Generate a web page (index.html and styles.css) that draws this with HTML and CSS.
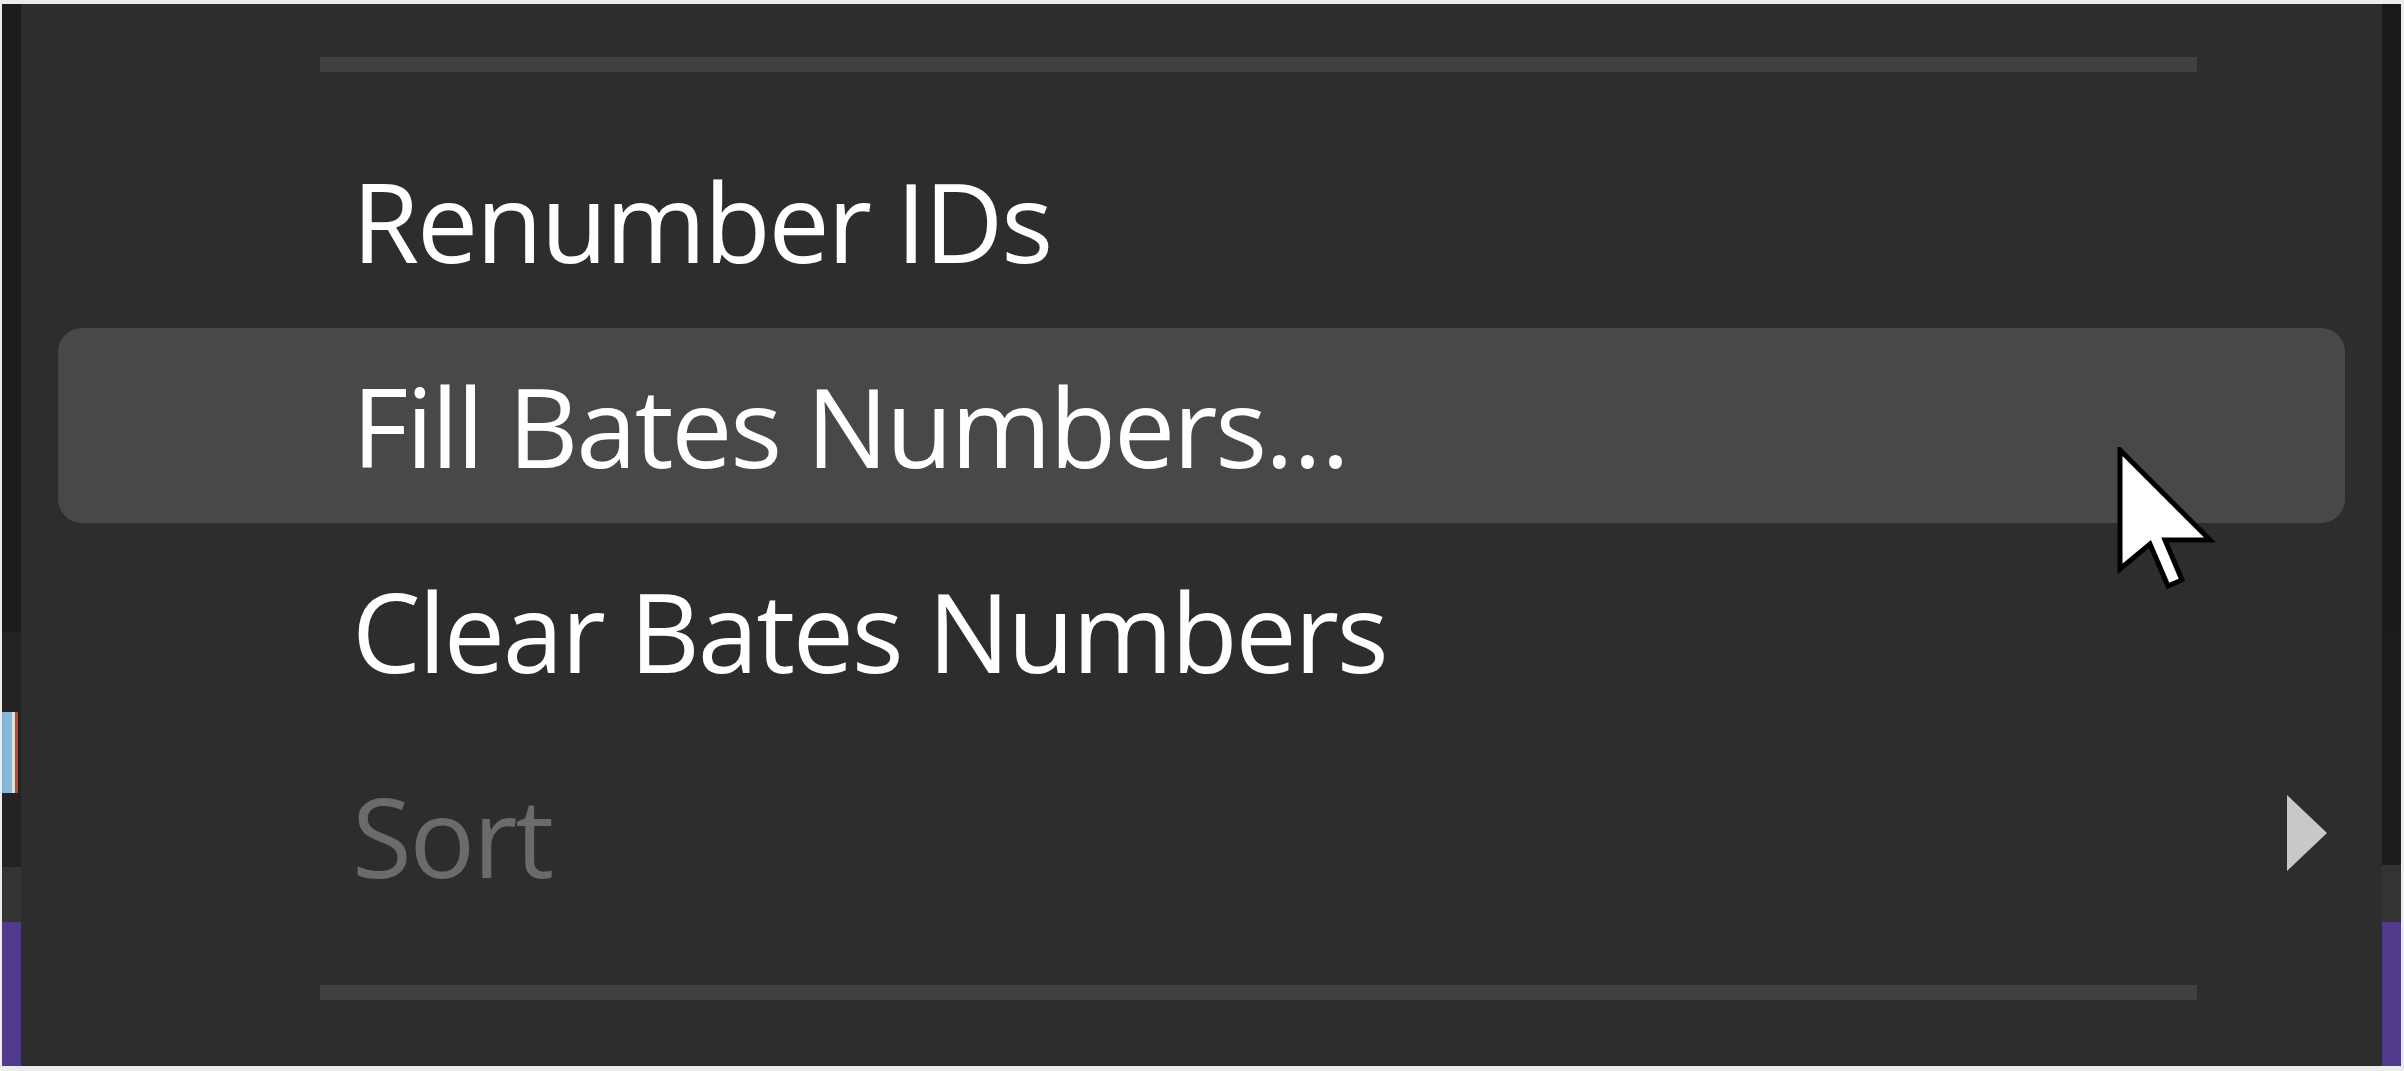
FILE: index.html
```html
<!DOCTYPE html>
<html lang="en">
<head>
<meta charset="utf-8">
<title>Context menu</title>
<link rel="stylesheet" href="styles.css">
</head>
<body>
<div class="frame">
  <div class="strip strip-left">
    <div class="seg seg-dark" style="height:628px"></div>
    <div class="seg seg-mid" style="height:80px"></div>
    <div class="seg seg-mid thumb-row" style="height:81px"><div class="thumb"></div></div>
    <div class="seg seg-mid" style="height:74px"></div>
    <div class="seg seg-light" style="height:55px"></div>
    <div class="seg seg-purple"></div>
  </div>

  <div class="menu">
    <div class="sep sep-top"></div>
    <ul class="items">
      <li class="item">Renumber IDs</li>
      <li class="item is-hover">Fill Bates Numbers…</li>
      <li class="item">Clear Bates Numbers</li>
      <li class="item is-disabled">Sort<span class="submenu-arrow"></span></li>
    </ul>
    <div class="sep sep-bottom"></div>
  </div>

  <div class="strip strip-right">
    <div class="seg seg-darkest" style="height:626px"></div>
    <div class="seg seg-dark" style="height:235px"></div>
    <div class="seg seg-light" style="height:57px"></div>
    <div class="seg seg-purple"></div>
  </div>

  <svg class="cursor" width="104" height="150" viewBox="0 0 104 150" aria-hidden="true">
    <polygon points="3,3 3,122 33,97 51,139 65,133 48,93 93,93"
             fill="#ffffff" stroke="#000000" stroke-width="5" stroke-linejoin="miter"/>
  </svg>
</div>
</body>
</html>
```

FILE: styles.css
```css
* { box-sizing: border-box; }

html, body {
  margin: 0;
  padding: 0;
}

body {
  width: 2404px;
  height: 1071px;
  background: #ececec;
  overflow: hidden;
  font-family: "Open Sans", "Noto Sans", "DejaVu Sans", sans-serif;
}

.frame {
  position: relative;
  display: flex;
  margin: 4px 3px 0 2px;
  height: 1062px;
}

.strip {
  width: 19px;
  display: flex;
  flex-direction: column;
  flex: none;
}

.seg { flex: none; }
.seg-darkest { background: #1a1a1a; }
.seg-dark { background: #1c1c1c; }
.seg-mid { background: #222222; }
.seg-light { background: #333333; }
.seg-purple { flex: 1; background: #4f3a8b; }

.thumb-row { display: flex; }
.thumb {
  width: 16px;
  height: 100%;
  background: linear-gradient(to right, #7fb2d4 0%, #8ebcd9 62%, #e6ded0 62%, #e6ded0 80%, #b24a3c 80%, #b24a3c 100%);
}

.menu {
  flex: 1;
  background: #2d2d2d;
  padding-top: 53px;
}

.sep {
  height: 15px;
  background: #404040;
  margin-left: 299px;
  margin-right: 185px;
}

.sep-bottom { margin-top: 47px; }

.items {
  list-style: none;
  margin: 46px 0 0 0;
  padding: 5px 37px;
  display: flex;
  flex-direction: column;
  gap: 10px;
}

.item {
  height: 195px;
  display: flex;
  align-items: center;
  padding: 0 18px 0 294px;
  border-radius: 24px;
  color: #ffffff;
  font-size: 109px;
  letter-spacing: -2.2px;
  line-height: 1;
  white-space: nowrap;
}

.item.is-hover { background: #484848; }

.item.is-disabled { color: #6b6b6b; }

.submenu-arrow {
  margin-left: auto;
  margin-top: -6px;
  width: 0;
  height: 0;
  border-left: 40px solid #c8c8c8;
  border-top: 38px solid transparent;
  border-bottom: 38px solid transparent;
}

.cursor {
  position: absolute;
  left: 2115px;
  top: 443px;
}
```
